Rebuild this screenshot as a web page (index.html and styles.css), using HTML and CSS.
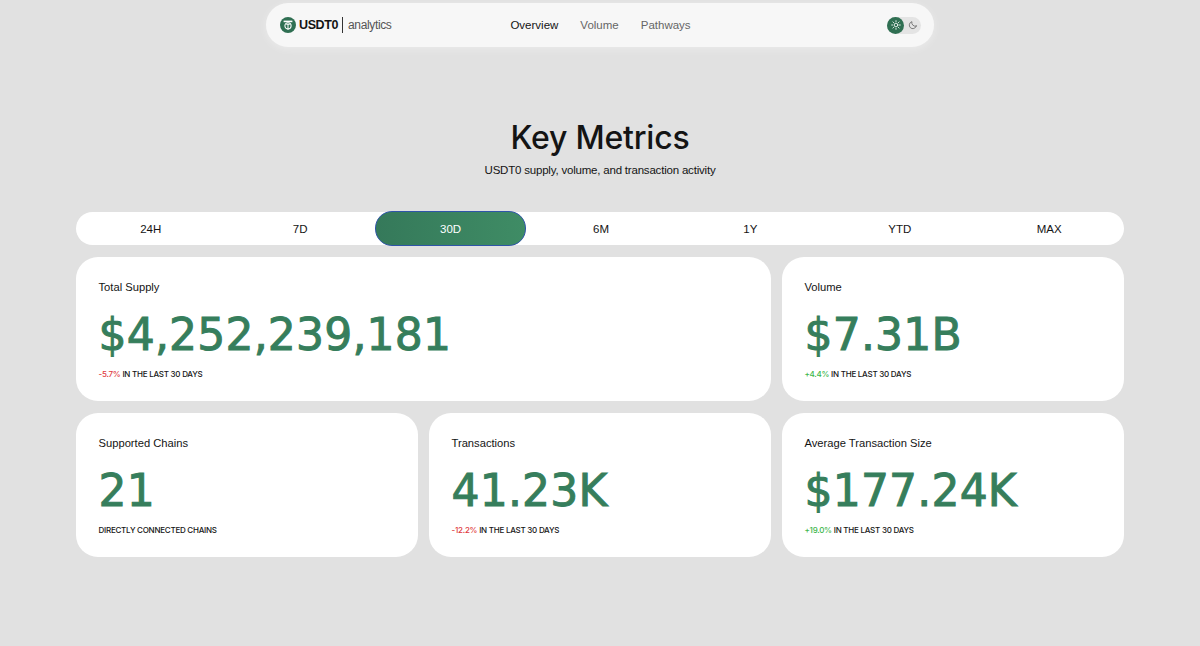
FILE: index.html
```html
<!DOCTYPE html>
<html lang="en">

<head>
    <meta charset="UTF-8">
    <meta name="viewport" content="width=device-width, initial-scale=1.0">
    <title>USDT0 analytics</title>
    <link rel="stylesheet" href="styles.css">
</head>

<body>
    <header class="navbar">
        <div class="marca">
            <svg class="logo" viewBox="0 0 16 16" width="16" height="16">
                <circle cx="8" cy="8" r="8" fill="#2f6f52" />
                <path d="M3.600 3.600h8.800v1.600H3.600z" fill="#fff" />
                <circle cx="8" cy="8.800" r="3.100" fill="none" stroke="#fff" stroke-width="1.100" />
                <path d="M6.200 7.300h3.600M8 7.300v5.500" fill="none" stroke="#fff" stroke-width="1" />
            </svg>
            <span class="marca-nombre">USDT0</span>
            <span class="marca-linea"></span>
            <span class="marca-sub">analytics</span>
        </div>
        <nav class="enlaces">
            <a class="enlace activo">Overview</a>
            <a class="enlace">Volume</a>
            <a class="enlace">Pathways</a>
        </nav>
        <div class="tema">
            <div class="tema-pill">
                <span class="tema-btn tema-on">
                    <svg viewBox="0 0 12 12" width="10" height="10" fill="none" stroke="#fff" stroke-width="1" stroke-linecap="round">
                        <circle cx="6" cy="6" r="2.200" />
                        <path d="M6 .8v1.200M6 10v1.200M.8 6H2M10 6h1.200M2.300 2.300l.9.9M8.800 8.800l.9.9M2.300 9.700l.9-.9M8.800 3.200l.9-.9" />
                    </svg>
                </span>
                <span class="tema-btn">
                    <svg viewBox="0 0 12 12" width="10" height="10" fill="none" stroke="#666" stroke-width="1" stroke-linecap="round">
                        <path d="M10 7.300A4.300 4.300 0 0 1 4.700 2a4.300 4.300 0 1 0 5.300 5.300z" />
                    </svg>
                </span>
            </div>
        </div>
    </header>

    <section class="titulo">
        <h1>Key Metrics</h1>
        <p>USDT0 supply, volume, and transaction activity</p>
    </section>

    <main class="contenedor">
        <div class="periodos">
            <button class="periodo">24H</button>
            <button class="periodo">7D</button>
            <button class="periodo seleccionado">30D</button>
            <button class="periodo">6M</button>
            <button class="periodo">1Y</button>
            <button class="periodo">YTD</button>
            <button class="periodo">MAX</button>
        </div>
        <div class="tarjetas">
            <div class="tarjeta ancha">
                <div class="etiqueta">Total Supply</div>
                <div class="valor">$4,252,239,181</div>
                <div class="nota"><span class="baja">-5.7%</span> IN THE LAST 30 DAYS</div>
            </div>
            <div class="tarjeta">
                <div class="etiqueta">Volume</div>
                <div class="valor">$7.31B</div>
                <div class="nota"><span class="sube">+4.4%</span> IN THE LAST 30 DAYS</div>
            </div>
            <div class="tarjeta">
                <div class="etiqueta">Supported Chains</div>
                <div class="valor">21</div>
                <div class="nota">DIRECTLY CONNECTED CHAINS</div>
            </div>
            <div class="tarjeta">
                <div class="etiqueta">Transactions</div>
                <div class="valor">41.23K</div>
                <div class="nota"><span class="baja">-12.2%</span> IN THE LAST 30 DAYS</div>
            </div>
            <div class="tarjeta">
                <div class="etiqueta">Average Transaction Size</div>
                <div class="valor">$177.24K</div>
                <div class="nota"><span class="sube">+19.0%</span> IN THE LAST 30 DAYS</div>
            </div>
        </div>
    </main>
</body>

</html>
```

FILE: styles.css
```css
body {
    margin: 0;
    background-color: #e1e1e1;
    color: #141414;
    font-family: "Liberation Sans", Arial, sans-serif;
}

.navbar {
    width: 668px;
    height: 44px;
    margin: 3px auto 0;
    padding: 0 13px 0 14px;
    box-sizing: border-box;
    display: flex;
    align-items: center;
    justify-content: space-between;
    background-color: #f7f7f7;
    border-radius: 22px;
    box-shadow: 0 2px 8px rgba(255, 255, 255, 0.35);
}

.marca {
    display: flex;
    align-items: center;
    width: 230px;
}

.logo {
    margin-right: 3px;
}

.marca-nombre {
    font-size: 12.500px;
    font-weight: 700;
    letter-spacing: -0.4px;
}

.marca-linea {
    width: 1px;
    height: 16px;
    margin: 0 5px 0 4px;
    background-color: #333;
}

.marca-sub {
    font-size: 12px;
    color: #555;
    letter-spacing: -0.35px;
}

.enlaces {
    display: flex;
    gap: 22px;
}

.enlace {
    font-size: 11.500px;
    color: #666;
}

.enlace.activo {
    color: #141414;
}

.tema {
    width: 230px;
    display: flex;
    justify-content: flex-end;
}

.tema-pill {
    display: flex;
    background-color: #e4e4e4;
    border-radius: 9px;
}

.tema-btn {
    width: 17px;
    height: 17px;
    border-radius: 50%;
    display: flex;
    align-items: center;
    justify-content: center;
}

.tema-on {
    background-color: #2f6f52;
}

.titulo {
    margin-top: 71px;
    text-align: center;
}

.titulo h1 {
    margin: 0;
    font-family: Inter, "Liberation Sans", sans-serif;
    font-size: 32px;
    line-height: 40px;
    font-weight: 500;
    letter-spacing: -0.2px;
}

.titulo p {
    margin: 4px 0 0;
    font-size: 11.500px;
    line-height: 16px;
    letter-spacing: -0.2px;
}

.contenedor {
    width: 1048px;
    margin: 34px auto 0;
}

.periodos {
    display: flex;
    height: 33px;
    background-color: #fff;
    border-radius: 17px;
}

.periodo {
    flex: 1;
    border: none;
    background-color: transparent;
    color: #141414;
    font-family: inherit;
    font-size: 11.500px;
    border-radius: 17px;
}

.periodo.seleccionado {
    margin: -1px 0;
    background: linear-gradient(90deg, #35795a, #3f8c65);
    color: #fff;
    border: 1.500px solid #2f55a8;
}

.tarjetas {
    display: grid;
    grid-template-columns: repeat(3, 1fr);
    gap: 12px 11px;
    margin-top: 12px;
}

.tarjeta {
    height: 144px;
    box-sizing: border-box;
    padding: 23px 22.500px 0;
    background-color: #fff;
    border-radius: 22px;
}

.ancha {
    grid-column: span 2;
}

.etiqueta {
    font-size: 11.200px;
    line-height: 14px;
}

.valor {
    margin-top: 13px;
    font-family: "DejaVu Sans", sans-serif;
    font-size: 44px;
    line-height: 56px;
    letter-spacing: 0.2px;
    color: #367e5c;
    -webkit-text-stroke: 1px #367e5c;
}

.nota {
    margin-top: 6px;
    font-family: Inter, "Liberation Sans", sans-serif;
    font-size: 8px;
    line-height: 10px;
    font-weight: 500;
    letter-spacing: -0.25px;
}

.baja {
    color: #e0393e;
}

.sube {
    color: #3cb64a;
}
```
